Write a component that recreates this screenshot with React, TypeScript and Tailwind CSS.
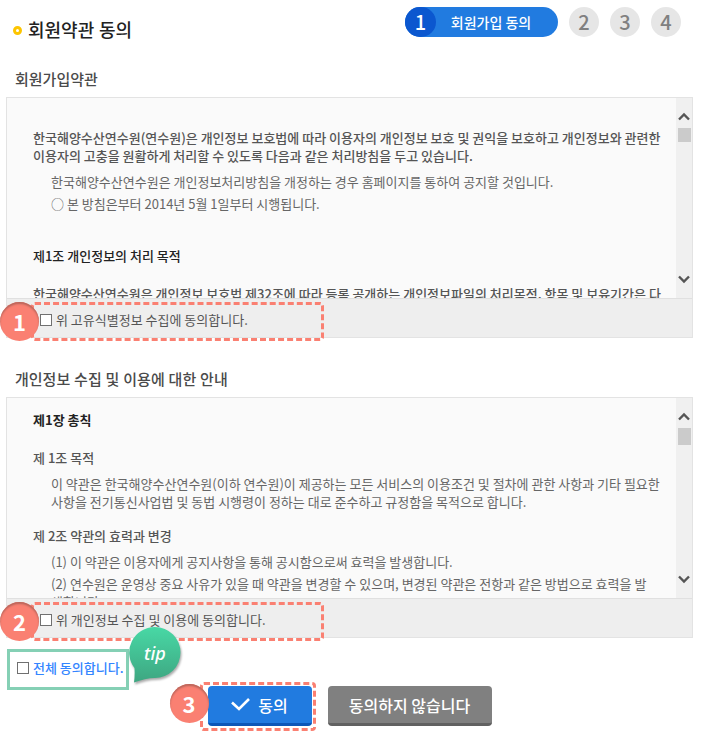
import React, { useState } from 'react';

interface TermsPanelProps {
  title: string;
  agreeLabel: string;
  badge: number;
  thumbClass: string;
  checked: boolean;
  onChange: (checked: boolean) => void;
  children: React.ReactNode;
}

const CHECKBOX =
  'h-3 w-3 shrink-0 appearance-none border border-[#707070] bg-white checked:bg-[#217be0]';

const Arrow = ({ down = false }: { down?: boolean }) => (
  <svg width="12" height="9" viewBox="0 0 12 9" fill="none" stroke="#555" strokeWidth="2.4">
    {down ? <path d="M1 1.5 6 6.5 11 1.5" /> : <path d="M1 7.5 6 2.5 11 7.5" />}
  </svg>
);

// Numbered marker that sits on top of the dashed outline
const Badge = ({ value, className }: { value: number; className: string }) => (
  <span
    className={`absolute z-10 flex h-[39px] w-[39px] items-center justify-center rounded-full bg-[#fa8072] pb-[2px] text-[22px] leading-6 font-bold text-white shadow-[inset_0_2px_2px_#b8655b] ${className}`}
  >
    {value}
  </span>
);

const Steps = () => (
  <ol className="flex items-center gap-[11px] text-xl leading-6 font-medium text-[#808080]">
    <li className="flex h-[30px] w-[153px] items-center rounded-full bg-[#217be0] text-white">
      <span className="flex h-[30px] w-[31px] items-center justify-center rounded-full bg-[#0b57cf]">1</span>
      <span className="flex-1 pr-3 text-center text-sm">회원가입 동의</span>
    </li>
    {[2, 3, 4].map((step) => (
      <li key={step} className="flex h-[30px] w-[30px] items-center justify-center rounded-full bg-[#e6e6e6]">
        {step}
      </li>
    ))}
  </ol>
);

const TermsPanel: React.FC<TermsPanelProps> = ({ title, agreeLabel, badge, thumbClass, checked, onChange, children }) => {
  return (
    <section>
      <h2 className="pl-[9px] font-['Noto_Sans','Noto_Sans_CJK_KR',sans-serif] text-[15px] leading-6 font-medium text-[#4a4a4a]">
        {title}
      </h2>
      <div className="mt-[6px] border border-[#e3e3e3]">
        <div className="flex h-[200px] bg-[#fafafa]">
          <div className="h-full min-w-0 flex-1 overflow-hidden pl-[26px] text-[13px] leading-[18px] text-[#666]">
            {children}
          </div>
          <div className="flex w-4 flex-col items-center bg-[#f0f0f0] pt-[14px] pb-[14px]">
            <button type="button" aria-label="위로">
              <Arrow />
            </button>
            <div className={`w-[13px] bg-[#cbcbcb] ${thumbClass}`} />
            <button type="button" aria-label="아래로" className="mt-auto">
              <Arrow down />
            </button>
          </div>
        </div>
        <div className="relative flex h-[39px] items-center border-t border-[#e0e0e0] bg-[#eee] pl-[33px]">
          <div className="pointer-events-none absolute top-[3px] left-6 h-[39px] w-[293px] rounded-sm border-3 border-dashed border-[#fa8072]" />
          <Badge value={badge} className="top-[3px] -left-[7px]" />
          <label className="flex items-center gap-1 pt-1 text-[13px] leading-[18px] text-[#555]">
            <input type="checkbox" className={CHECKBOX} checked={checked} onChange={(e) => onChange(e.target.checked)} />
            {agreeLabel}
          </label>
        </div>
      </div>
    </section>
  );
};

const App: React.FC = () => {
  const [terms, setTerms] = useState(false);
  const [privacy, setPrivacy] = useState(false);

  const handleAll = (checked: boolean) => {
    setTerms(checked);
    setPrivacy(checked);
  };

  return (
    <main className="bg-white pr-2 pb-2 pl-[6px] font-['Noto_Sans_CJK_KR',sans-serif]">
      <header className="flex items-start justify-between pt-[7px] pr-3 pl-[7px]">
        <h1 className="flex items-center gap-[6px] pt-[10px] font-['Noto_Sans','Noto_Sans_CJK_KR',sans-serif] text-lg leading-[26px] font-medium text-[#222]">
          <span className="h-[9px] w-[9px] rounded-full border-3 border-[#fdc500]" />
          회원약관 동의
        </h1>
        <Steps />
      </header>

      <div className="mt-6 flex flex-col gap-[29px]">
        <TermsPanel
          title="회원가입약관"
          agreeLabel="위 고유식별정보 수집에 동의합니다."
          badge={1}
          thumbClass="mt-[7px] h-[14px]"
          checked={terms}
          onChange={setTerms}
        >
          <p className="pt-[31px] font-medium whitespace-nowrap text-[#555]">
            한국해양수산연수원(연수원)은 개인정보 보호법에 따라 이용자의 개인정보 보호 및 권익을 보호하고 개인정보와 관련한
            <br />
            이용자의 고충을 원활하게 처리할 수 있도록 다음과 같은 처리방침을 두고 있습니다.
          </p>
          <ul className="mt-2 flex flex-col gap-1 pl-[18px]">
            <li>한국해양수산연수원은 개인정보처리방침을 개정하는 경우 홈페이지를 통하여 공지할 것입니다.</li>
            <li>○ 본 방침은부터 2014년 5월 1일부터 시행됩니다.</li>
          </ul>
          <h3 className="mt-[34px] font-medium text-[#222]">제1조 개인정보의 처리 목적</h3>
          <p className="mt-5 font-medium whitespace-nowrap text-[#555]">
            한국해양수산연수원은 개인정보 보호법 제32조에 따라 등록 공개하는 개인정보파일의 처리목적, 항목 및 보유기간은 다
          </p>
        </TermsPanel>

        <TermsPanel
          title="개인정보 수집 및 이용에 대한 안내"
          agreeLabel="위 개인정보 수집 및 이용에 동의합니다."
          badge={2}
          thumbClass="mt-[7px] h-[17px]"
          checked={privacy}
          onChange={setPrivacy}
        >
          <h3 className="pt-[13px] font-bold text-[#222]">제1장 총칙</h3>
          <h4 className="mt-5 font-medium text-[#555]">제 1조 목적</h4>
          <p className="mt-2 pl-[18px] whitespace-nowrap">
            이 약관은 한국해양수산연수원(이하 연수원)이 제공하는 모든 서비스의 이용조건 및 절차에 관한 사항과 기타 필요한
            <br />
            사항을 전기통신사업법 및 동법 시행령이 정하는 대로 준수하고 규정함을 목적으로 합니다.
          </p>
          <h4 className="mt-4 font-medium text-[#555]">제 2조 약관의 효력과 변경</h4>
          <ul className="mt-2 flex flex-col gap-1 pl-[18px] whitespace-nowrap">
            <li>(1) 이 약관은 이용자에게 공지사항을 통해 공시함으로써 효력을 발생합니다.</li>
            <li>
              (2) 연수원은 운영상 중요 사유가 있을 때 약관을 변경할 수 있으며, 변경된 약관은 전항과 같은 방법으로 효력을 발
              <br />
              생합니다.
            </li>
          </ul>
        </TermsPanel>
      </div>

      <div className="relative mt-[11px] ml-px flex h-[41px] w-[122px] items-center border-3 border-[#85d0b5] pb-1 pl-[7px]">
        <label className="flex items-center gap-1 text-[13px] leading-[18px] font-medium whitespace-nowrap text-[#3385ff]">
          <input
            type="checkbox"
            className={CHECKBOX}
            checked={terms && privacy}
            onChange={(e) => handleAll(e.target.checked)}
          />
          전체 동의합니다.
        </label>
        <div className="absolute -top-[25px] left-[119px] flex h-[56px] w-[52px] justify-center">
          <svg className="absolute inset-0 drop-shadow-[1px_2px_1px_#00000055]" width="52" height="56" viewBox="0 0 52 56">
            <defs>
              <linearGradient id="tip" x1="0" y1="0" x2="0" y2="1">
                <stop offset="0" stopColor="#48d8a5" />
                <stop offset="1" stopColor="#3ea681" />
              </linearGradient>
            </defs>
            <path d="M26 0a25.5 25.5 0 0 1 0 51C20 51 12 53 5 55.5Q6 48 5.500 41A25.500 25.500 0 0 1 26 0Z" fill="url(#tip)" />
          </svg>
          <span className="relative pt-[14px] font-['Noto_Sans',sans-serif] text-lg leading-6 font-medium text-white italic">tip</span>
        </div>
      </div>

      <div className="-mt-1 flex justify-center gap-4 text-base leading-6 font-medium text-white">
        <div className="relative">
          <div className="pointer-events-none absolute -top-1 -right-1 -bottom-[5px] -left-2 rounded-sm border-3 border-dashed border-[#fa8072]" />
          <Badge value={3} className="-top-[2px] -left-[38px]" />
          <button
            type="button"
            className="flex h-10 w-[104px] items-center justify-center gap-2 rounded border-b-3 border-[#0c57b8] bg-[#217be0]"
          >
            <svg width="19" height="13" viewBox="0 0 19 13" fill="none" stroke="#fff" strokeWidth="2.6">
              <path d="M1 4.5 8 11 18 1" />
            </svg>
            동의
          </button>
        </div>
        <button type="button" className="h-10 w-[164px] rounded border-b-3 border-[#616161] bg-[#808080]">
          동의하지 않습니다
        </button>
      </div>
    </main>
  );
};

export default App;
